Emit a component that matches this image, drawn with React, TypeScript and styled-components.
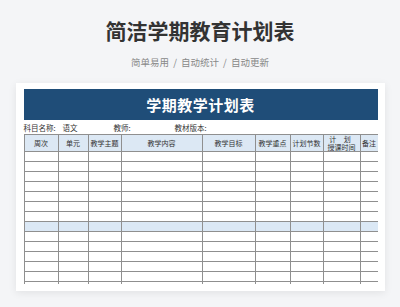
import React from 'react';
import styled, { createGlobalStyle } from 'styled-components';

const GlobalStyle = createGlobalStyle`
  html, body {
    margin: 0;
    padding: 0;
    background: #f4f5f7;
  }
  body {
    font-family: 'Noto Sans CJK SC', 'Noto Sans', sans-serif;
  }
`;

const Page = styled.div`
  width: 400px;
  height: 307px;
  overflow: hidden;
  padding-top: 17px;
  box-sizing: border-box;
  display: flex;
  flex-direction: column;
  align-items: center;
`;

const Title = styled.h1`
  margin: 0;
  font-size: 21px;
  line-height: 26px;
  font-weight: 700;
  color: #333;
`;

const Subtitle = styled.p`
  margin: 12px 0 0;
  font-size: 9.5px;
  line-height: 14px;
  color: #888;
  word-spacing: 2px;
`;

const Card = styled.section`
  margin-top: 14px;
  width: 369px;
  height: 208px;
  box-sizing: border-box;
  padding: 6px 7px 7px 8px;
  background: #fff;
  box-shadow: 0 2px 8px rgba(0, 0, 0, 0.08);
  display: flex;
  flex-direction: column;
`;

const Banner = styled.div`
  height: 31px;
  background: #1f4d78;
  color: #fff;
  font-size: 15px;
  font-weight: 700;
  display: flex;
  align-items: center;
  justify-content: center;
  letter-spacing: 0.5px;
`;

const InfoRow = styled.div`
  height: 14px;
  display: flex;
  align-items: center;
  font-size: 7.5px;
  color: #333;
`;

const InfoCell = styled.span<{ $w?: number }>`
  width: ${({ $w }) => ($w ? `${$w}px` : 'auto')};
  flex-shrink: 0;
`;

const TableWrap = styled.div`
  flex: 1;
  overflow: hidden;
`;

const Table = styled.table`
  width: 354px;
  border-collapse: collapse;
  table-layout: fixed;
  font-size: 7px;
  color: #333;

  th,
  td {
    border: 1px solid #8f8f8f;
    padding: 0;
    text-align: center;
  }
  th {
    height: 16px;
    background: #dce8f4;
    font-weight: 400;
    line-height: 8px;
    overflow: hidden;
  }
  td {
    height: 9px;
  }
`;

const BodyRow = styled.tr<{ $hl?: boolean }>`
  background: ${({ $hl }) => ($hl ? '#dbe8f5' : '#fff')};
`;

const TwoLine = styled.span`
  display: block;
  line-height: 8px;
`;

const Spread = styled.span`
  letter-spacing: 3px;
`;

const cols = [34, 30, 33, 81, 53, 35, 33, 37, 18];

export default function App(): JSX.Element {
  const rows = Array.from({ length: 15 }, (_, i) => i);
  return (
    <>
      <GlobalStyle />
      <Page>
        <Title>简洁学期教育计划表</Title>
        <Subtitle>简单易用 / 自动统计 / 自动更新</Subtitle>
        <Card>
          <Banner>学期教学计划表</Banner>
          <InfoRow>
            <InfoCell $w={39}>科目名称:</InfoCell>
            <InfoCell $w={51}>语文</InfoCell>
            <InfoCell $w={61}>教师:</InfoCell>
            <InfoCell>教材版本:</InfoCell>
          </InfoRow>
          <TableWrap>
            <Table>
              <colgroup>
                {cols.map((w, i) => (
                  <col key={i} style={{ width: w }} />
                ))}
              </colgroup>
              <thead>
                <tr>
                  <th>周次</th>
                  <th>单元</th>
                  <th>教学主题</th>
                  <th>教学内容</th>
                  <th>教学目标</th>
                  <th>教学重点</th>
                  <th>计划节数</th>
                  <th>
                    <TwoLine>
                      <Spread>计 划</Spread>
                    </TwoLine>
                    <TwoLine>授课时间</TwoLine>
                  </th>
                  <th>备注</th>
                </tr>
              </thead>
              <tbody>
                {rows.map((r) => (
                  <BodyRow key={r} $hl={r === 7}>
                    {cols.map((_, c) => (
                      <td key={c} />
                    ))}
                  </BodyRow>
                ))}
              </tbody>
            </Table>
          </TableWrap>
        </Card>
      </Page>
    </>
  );
}
